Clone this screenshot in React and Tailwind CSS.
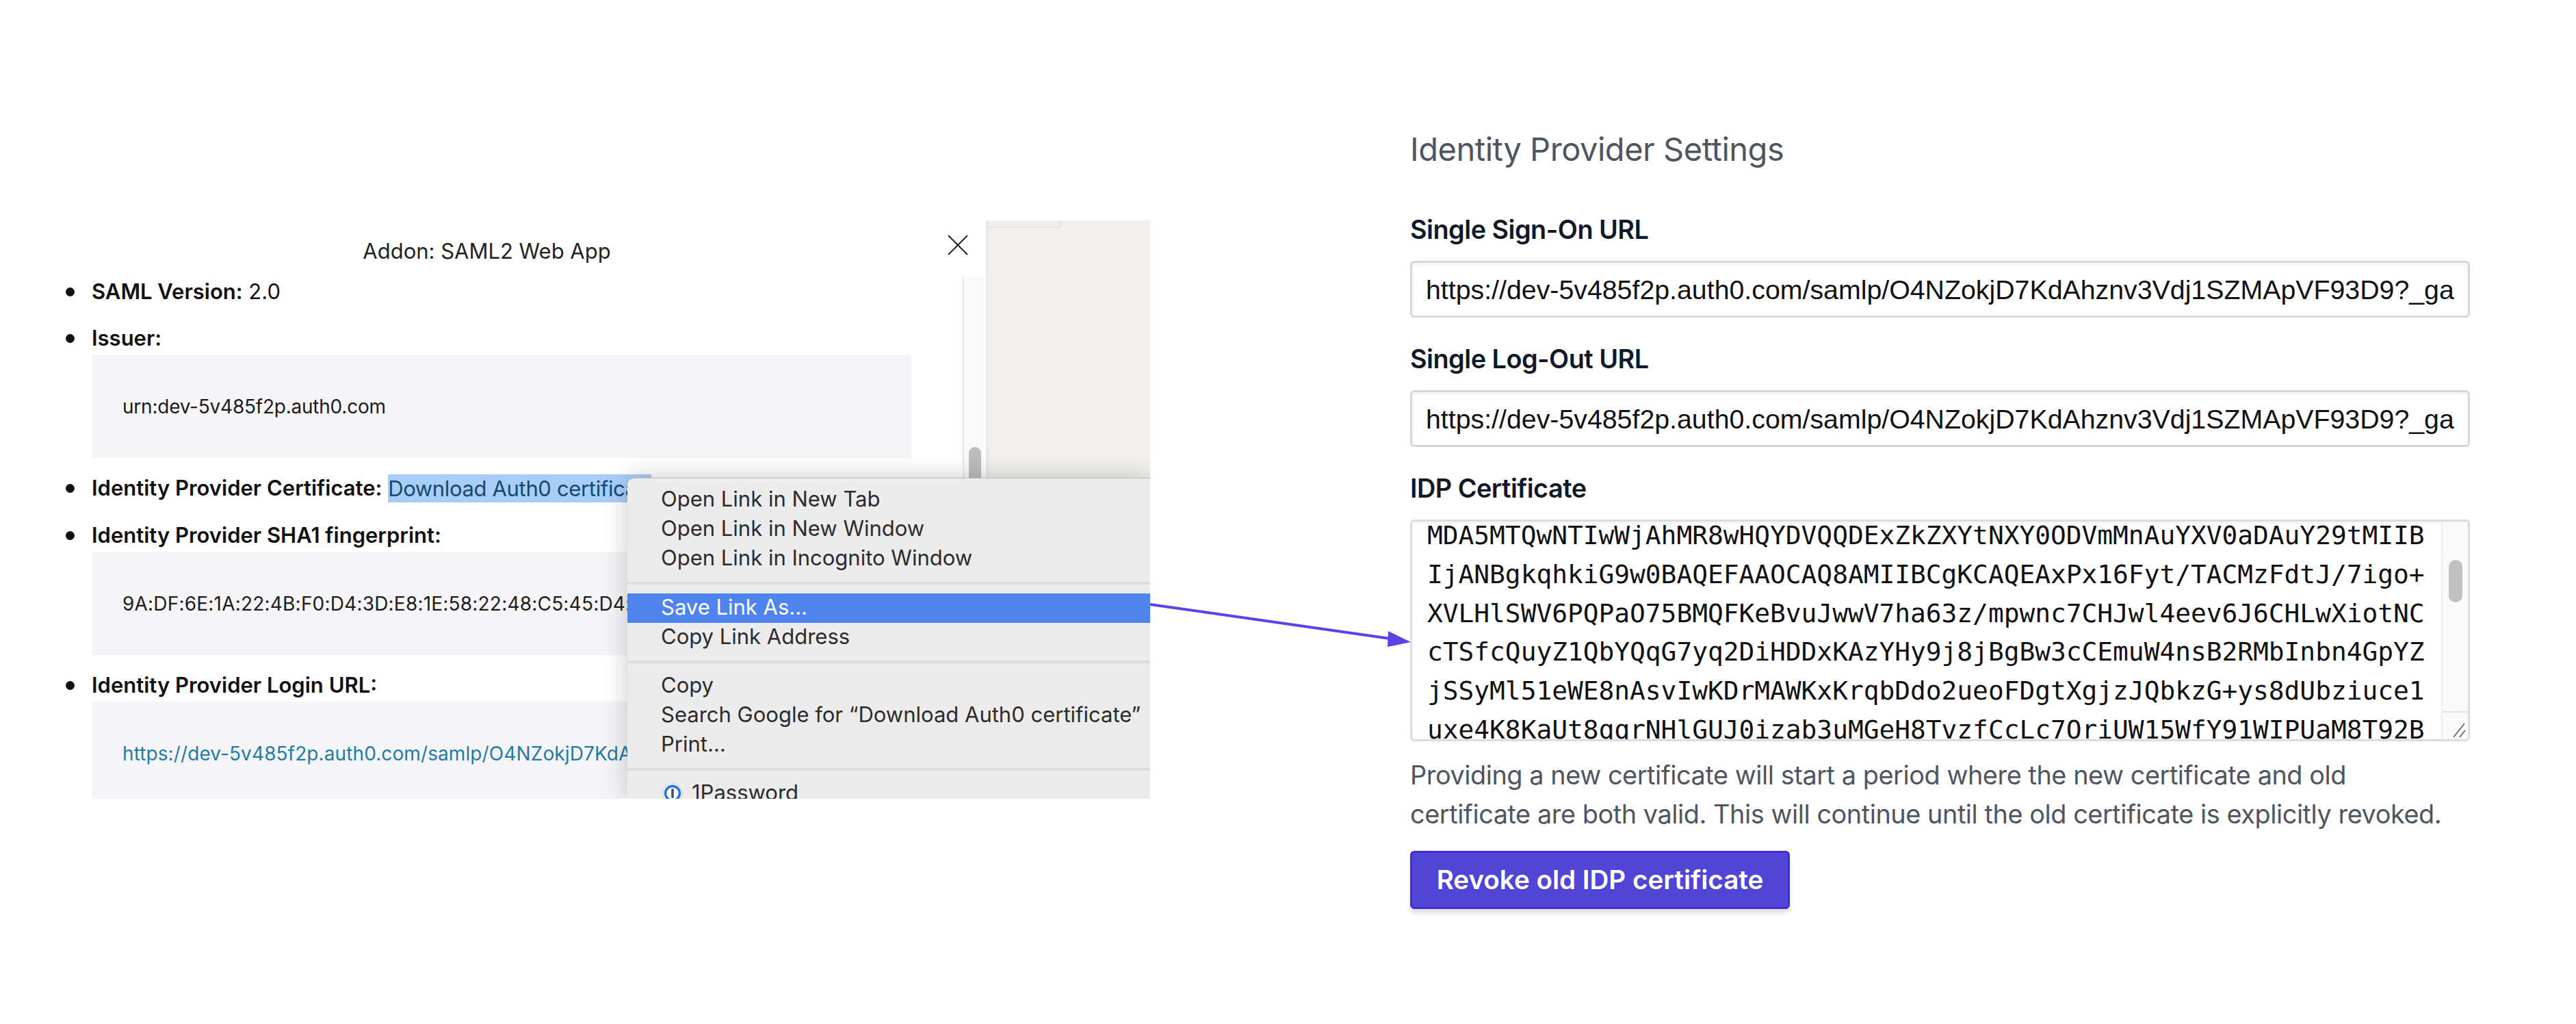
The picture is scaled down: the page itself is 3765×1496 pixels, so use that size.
const URL_TEXT = 'https://dev-5v485f2p.auth0.com/samlp/O4NZokjD7KdAhznv3Vdj1SZMApVF93D9?_ga';

const CERT_LINES = [
  'MDA5MTQwNTIwWjAhMR8wHQYDVQQDExZkZXYtNXY0ODVmMnAuYXV0aDAuY29tMIIB',
  'IjANBgkqhkiG9w0BAQEFAAOCAQ8AMIIBCgKCAQEAxPx16Fyt/TACMzFdtJ/7igo+',
  'XVLHlSWV6PQPaO75BMQFKeBvuJwwV7ha63z/mpwnc7CHJwl4eev6J6CHLwXiotNC',
  'cTSfcQuyZ1QbYQqG7yq2DiHDDxKAzYHy9j8jBgBw3cCEmuW4nsB2RMbInbn4GpYZ',
  'jSSyMl51eWE8nAsvIwKDrMAWKxKrqbDdo2ueoFDgtXgjzJQbkzG+ys8dUbziuce1',
  'uxe4K8KaUt8qqrNHlGUJ0izab3uMGeH8TvzfCcLc7OriUW15WfY91WIPUaM8T92B',
];

const bulletClass =
  "relative before:absolute before:left-[-38px] before:top-[14px] before:h-[13px] before:w-[13px] before:rounded-full before:bg-[#111]";

function MenuRow({ children, active }) {
  return (
    <div className={`flex h-[43px] items-center pb-[2px] pl-[49px] whitespace-nowrap ${active ? 'bg-[#4f84ee] text-white' : 'text-[#2b2b2b]'}`}>
      {children}
    </div>
  );
}

function MenuSep({ className }) {
  return <div className={`h-[4px] bg-[#dcdcdc] ${className}`} />;
}

function ContextMenu() {
  return (
    <div className="absolute left-[917px] top-[376px] right-0 bottom-0 overflow-hidden rounded-tl-[10px] border-t border-[#bcbcbc] bg-[#ececec] pt-[10px] text-[31px] font-['Inter',sans-serif] shadow-[0_0_36px_rgba(0,0,0,0.22)]">
      <MenuRow>Open Link in New Tab</MenuRow>
      <MenuRow>Open Link in New Window</MenuRow>
      <MenuRow>Open Link in Incognito Window</MenuRow>
      <MenuSep className="mt-[12px] mb-[13px]" />
      <MenuRow active>Save Link As…</MenuRow>
      <MenuRow>Copy Link Address</MenuRow>
      <MenuSep className="my-[12px]" />
      <MenuRow>Copy</MenuRow>
      <MenuRow>Search Google for “Download Auth0 certificate”</MenuRow>
      <MenuRow>Print…</MenuRow>
      <MenuSep className="my-[12px]" />
      <MenuRow>
        <svg width="30" height="30" viewBox="0 0 30 30" className="mr-[13px] ml-[2px] shrink-0">
          <circle cx="15" cy="15" r="14" fill="#ffffff" stroke="#c9c9c9" strokeWidth="1" />
          <circle cx="15" cy="15" r="10.5" fill="none" stroke="#1a73e8" strokeWidth="3.5" />
          <rect x="13.2" y="8" width="3.6" height="14" rx="1.5" fill="#44506a" />
        </svg>
        1Password
      </MenuRow>
    </div>
  );
}

function CodeBox({ children, className = 'text-[#1b1b1b]' }) {
  return (
    <div className={`mt-[4px] flex h-[151px] items-center overflow-hidden whitespace-nowrap bg-[#f5f5f7] pl-[45px] text-[28px] ${className}`}>
      {children}
    </div>
  );
}

function AddonModal() {
  return (
    <div className="relative mt-[322px] flex h-[845px] w-[1681px] shrink-0 overflow-hidden font-['Inter',sans-serif] text-[#111]">
      <div className="w-[1441px] shrink-0 bg-white">
        <div className="h-[84px] pt-[25px] pr-[18px] text-center text-[31px] leading-[40px] text-[#222]">
          Addon: SAML2 Web App
        </div>
        <ul className="list-none pl-[134px] pr-[109px] text-[31px] leading-[40px]">
          <li className={bulletClass}>
            <b className="font-semibold">SAML Version:</b> 2.0
          </li>
          <li className={`mt-[28px] ${bulletClass}`}>
            <b className="font-semibold">Issuer:</b>
            <CodeBox className="text-[#1b1b1b] tracking-[-0.23px]">urn:dev-5v485f2p.auth0.com</CodeBox>
          </li>
          <li className={`mt-[24px] whitespace-nowrap ${bulletClass}`}>
            <b className="font-semibold">Identity Provider Certificate:</b>{' '}
            <span className="inline-block w-[385px] overflow-hidden bg-[#a9cdf9] align-top leading-[41px] tracking-[-0.35px] text-[#14496b]">
              Download Auth0 certificate
            </span>
          </li>
          <li className={`mt-[28px] ${bulletClass}`}>
            <b className="font-semibold">Identity Provider SHA1 fingerprint:</b>
            <CodeBox className="text-[#1b1b1b] tracking-[0.2px]">9A:DF:6E:1A:22:4B:F0:D4:3D:E8:1E:58:22:48:C5:45:D4:</CodeBox>
          </li>
          <li className={`mt-[24px] ${bulletClass}`}>
            <b className="font-semibold">Identity Provider Login URL:</b>
            <CodeBox className="text-[#1f7ba6] tracking-[0.1px]">{URL_TEXT}</CodeBox>
          </li>
        </ul>
      </div>

      <div className="w-[240px] shrink-0 bg-[#f1f0ef] shadow-[inset_10px_0_10px_-10px_rgba(0,0,0,0.08)]">
        <div className="h-[11px] w-[111px] rounded-br-[8px] border-r-2 border-b-2 border-[#e6e6e4]" />
      </div>

      {/* close icon and the modal's own scrollbar sit over the panel */}
      <svg width="30" height="30" viewBox="0 0 30 30" className="absolute left-[1385px] top-[21px]">
        <path d="M1 1L29 29M29 1L1 29" stroke="#222" strokeWidth="2" fill="none" />
      </svg>
      <div className="absolute left-[1407px] top-[82px] h-[300px] w-[32px] border-l-2 border-[#e8e8e8] bg-[#fafafa]">
        <div className="ml-[7px] mt-[249px] h-[60px] w-[18px] rounded-full bg-[#bdbdbd]" />
      </div>

      <ContextMenu />
    </div>
  );
}

function Label({ children, className }) {
  return <div className={`text-[37.8px] leading-[40px] font-semibold tracking-[-0.5px] text-[#111827] ${className}`}>{children}</div>;
}

function UrlField() {
  return (
    <div className="mt-[26px] flex h-[83px] items-center overflow-hidden rounded-[6px] border-[3px] border-[#d5d7dc] bg-white pt-[2px] pl-[20px] pr-[10px] text-[39.3px] text-[#111] shadow-[inset_0_3px_4px_rgba(0,0,0,0.05)]">
      <div className="whitespace-nowrap font-['Liberation_Sans',sans-serif]">{URL_TEXT}</div>
    </div>
  );
}

function CertField() {
  return (
    <div className="mt-[26px] flex h-[324px] overflow-hidden rounded-[6px] border-[3px] border-[#d9dce2] bg-white shadow-[inset_0_3px_4px_rgba(0,0,0,0.05)]">
      <div className="min-w-0 flex-1 overflow-hidden pl-[22px] font-['DejaVu_Sans_Mono',monospace] text-[37.85px] leading-[56.8px] text-[#111]">
        <div className="-mt-[8px] whitespace-pre">
          {CERT_LINES.map((line) => (
            <div key={line}>{line}</div>
          ))}
        </div>
      </div>
      <div className="flex w-[39px] shrink-0 flex-col justify-between border-l-2 border-[#ececec] bg-[#fafafa]">
        <div className="ml-[9px] mt-[56px] h-[62px] w-[20px] rounded-full bg-[#c1c1c1]" />
        <div className="flex h-[41px] items-end justify-end border-t-2 border-[#e2e2e2] pb-[2px] pr-[2px]">
          <svg width="20" height="24" viewBox="0 0 20 24">
            <path d="M1 23L17 3M10 23L18 13" stroke="#6b6b6b" strokeWidth="2" fill="none" />
          </svg>
        </div>
      </div>
    </div>
  );
}

function IdpSettings() {
  return (
    <div className="ml-[380px] w-[1549px] shrink-0 pt-[188px] font-['Inter',sans-serif]">
      <div className="text-[47px] leading-[60px] tracking-[-0.46px] text-[#4f5560]">Identity Provider Settings</div>
      <Label className="mt-[67px]">Single Sign-On URL</Label>
      <UrlField />
      <Label className="mt-[40px]">Single Log-Out URL</Label>
      <UrlField />
      <Label className="mt-[40px]">IDP Certificate</Label>
      <CertField />
      <p className="mt-[21px] text-[37.8px] leading-[57px] tracking-[-0.42px] text-[#4f5560]">
        Providing a new certificate will start a period where the new certificate and old certificate are both valid. This
        will continue until the old certificate is explicitly revoked.
      </p>
      <button className="mt-[25px] h-[85px] w-[555px] rounded-[6px] border-[3px] border-[#3f2fd8] bg-[#5145d6] text-[38.6px] font-semibold text-white shadow-[0_6px_6px_rgba(0,0,0,0.12)]">
        Revoke old IDP certificate
      </button>
    </div>
  );
}

export default function App() {
  return (
    <div className="relative flex h-[1496px] w-[3765px] items-start overflow-hidden bg-white">
      <AddonModal />
      <IdpSettings />
      <svg width="400" height="80" viewBox="0 0 400 80" className="absolute left-[1670px] top-[870px]">
        <path d="M11 13L362 63" stroke="#5f3fe6" strokeWidth="4" fill="none" />
        <path d="M392 68L359 52L358 75Z" fill="#5f3fe6" />
      </svg>
    </div>
  );
}
